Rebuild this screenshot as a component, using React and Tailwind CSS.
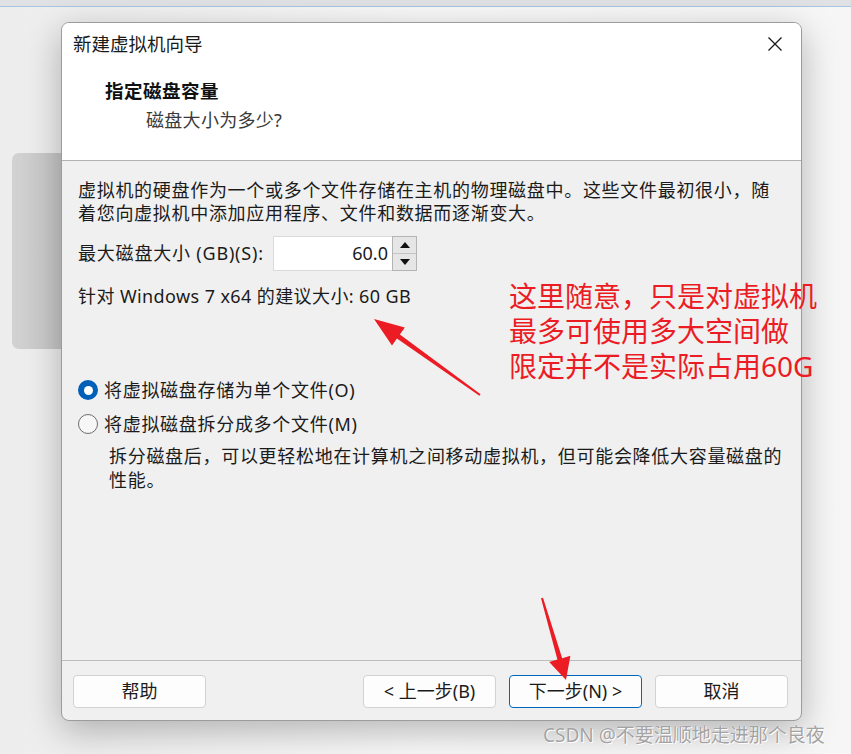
import React, { useState } from 'react';

const cjk = "font-['Noto_Sans','Noto_Sans_CJK_SC',sans-serif]";

function Radio({ checked, label, onSelect }) {
  return (
    <button type="button" onClick={onSelect} className="flex h-[24px] items-center gap-[6px] text-left">
      {checked ? (
        <span className="flex h-[20px] w-[20px] items-center justify-center rounded-full bg-[#005fb8]">
          <span className="h-[9px] w-[9px] rounded-full bg-white" />
        </span>
      ) : (
        <span className="h-[20px] w-[20px] rounded-full border border-[#6e6e6e] bg-[#f7f7f7]" />
      )}
      <span className="tracking-[0.7px]">{label}</span>
    </button>
  );
}

function Btn({ children, primary }) {
  return (
    <button
      type="button"
      className={
        'h-[33px] w-[133px] rounded-[4px] border bg-[#fdfdfd] text-[18px] text-[#1b1b1b] ' +
        (primary ? 'border-[#0067c0]' : 'border-[#d2d2d2]')
      }
    >
      {children}
    </button>
  );
}

export default function App() {
  const [size, setSize] = useState(60);
  const [mode, setMode] = useState('single');

  return (
    <div className={`relative h-[754px] w-[851px] overflow-hidden bg-gradient-to-r from-[#ededed] via-[#f9f9f9] to-[#f6f6f6] ${cjk}`}>
      <div className="h-[7px] border-b border-[#a8c4e2] bg-[#dfe1e5]" />

      {/* window behind the dialog */}
      <div className="absolute left-[12px] top-[153px] h-[196px] w-[60px] rounded-l-[7px] bg-gradient-to-r from-[#d2d2d2] to-[#c4c4c4]" />

      <div className="relative ml-[61px] mt-[15px] flex h-[699px] w-[741px] flex-col overflow-hidden rounded-[8px] border border-[#9c9c9c] bg-[#f0f0f0] shadow-[0_10px_36px_rgba(0,0,0,0.28)]">
        <div className="h-[138px] shrink-0 border-b border-[#b2b2b2] bg-white">
          <div className="flex items-center justify-between pl-[11px] pr-[18px] pt-[9px]">
            <span className="text-[18.5px] leading-[24px] text-[#1a1a1a]">新建虚拟机向导</span>
            <svg width="16" height="16" viewBox="0 0 16 16" className="text-[#1a1a1a]">
              <path d="M1.5 1.5 L14.5 14.5 M14.5 1.5 L1.5 14.5" stroke="currentColor" strokeWidth="1.3" fill="none" />
            </svg>
          </div>
          <div className="mt-[23px] pl-[43px] text-[18.5px] font-bold leading-[24px] tracking-[0.5px] text-[#111]">指定磁盘容量</div>
          <div className="mt-[5px] pl-[84px] text-[18px] leading-[24px] tracking-[0.3px] text-[#3a3a3a]">磁盘大小为多少?</div>
        </div>

        <div className="flex-1 px-[16px] pt-[18px] text-[18px] text-[#1b1b1b]">
          <p className="leading-[23px] tracking-[0.7px]">
            虚拟机的硬盘作为一个或多个文件存储在主机的物理磁盘中。这些文件最初很小，随着您向虚拟机中添加应用程序、文件和数据而逐渐变大。
          </p>

          <div className="mt-[11px] flex h-[35px] items-center">
            <span className="w-[195px] tracking-[0.8px]">最大磁盘大小 (GB)(S):</span>
            <div className="flex h-[35px] w-[119px] items-center justify-end border-b border-l border-t border-[#dadada] bg-white pr-[4px]">
              <span className="text-[18px]">{size.toFixed(1)}</span>
            </div>
            <div className="flex h-[35px] w-[25px] flex-col border border-[#b4b4b4] bg-[#e6e6e6]">
              <button type="button" onClick={() => setSize(size + 1)} className="flex flex-1 items-center justify-center border-b border-[#c4c4c4]">
                <svg width="10" height="6" viewBox="0 0 10 6"><path d="M0 6 L5 0 L10 6 Z" fill="#111" /></svg>
              </button>
              <button type="button" onClick={() => setSize(Math.max(1, size - 1))} className="flex flex-1 items-center justify-center">
                <svg width="10" height="6" viewBox="0 0 10 6"><path d="M0 0 L10 0 L5 6 Z" fill="#111" /></svg>
              </button>
            </div>
          </div>

          <div className="mt-[14px] leading-[23px] tracking-[0.4px]">针对 Windows 7 x64 的建议大小: 60 GB</div>

          <div className="mt-[70px]">
            <Radio checked={mode === 'single'} label="将虚拟磁盘存储为单个文件(O)" onSelect={() => setMode('single')} />
          </div>
          <div className="mt-[10px]">
            <Radio checked={mode === 'multi'} label="将虚拟磁盘拆分成多个文件(M)" onSelect={() => setMode('multi')} />
          </div>
          <p className="mt-[8px] pl-[31px] leading-[24px] tracking-[0.7px]">
            拆分磁盘后，可以更轻松地在计算机之间移动虚拟机，但可能会降低大容量磁盘的性能。
          </p>
        </div>

        <div className="flex h-[60px] shrink-0 items-start border-t border-[#bdbdbd] pl-[11px] pr-[13px] pt-[14px]">
          <Btn>帮助</Btn>
          <div className="ml-auto flex gap-[13px]">
            <Btn>&lt; 上一步(B)</Btn>
            <Btn primary>下一步(N) &gt;</Btn>
            <Btn>取消</Btn>
          </div>
        </div>
      </div>

      {/* annotation */}
      <div className="absolute left-[509px] top-[279px] text-[28px] leading-[35px] text-[#ec1c24]">
        <div>这里随意，只是对虚拟机</div>
        <div>最多可使用多大空间做</div>
        <div>限定并不是实际占用60G</div>
      </div>
      <svg className="pointer-events-none absolute left-0 top-0" width="851" height="754">
        <polygon
          points="480.6,394.2 399.9,334.5 404.8,327.6 374,319 392,345.4 396.9,338.5 479.4,395.8"
          fill="#ec1c24"
        />
        <polygon
          points="543,597.7 562.2,658.2 570.4,655.8 566,680 549.2,662 557.4,659.6 541,598.3"
          fill="#ec1c24"
        />
      </svg>

      <div className="absolute left-[543px] top-[722px] text-[19px] leading-[26px] text-[#a3a3a3] [text-shadow:0_0_1px_#fff,1px_1px_0_#fff]">
        CSDN @不要温顺地走进那个良夜
      </div>
    </div>
  );
}
